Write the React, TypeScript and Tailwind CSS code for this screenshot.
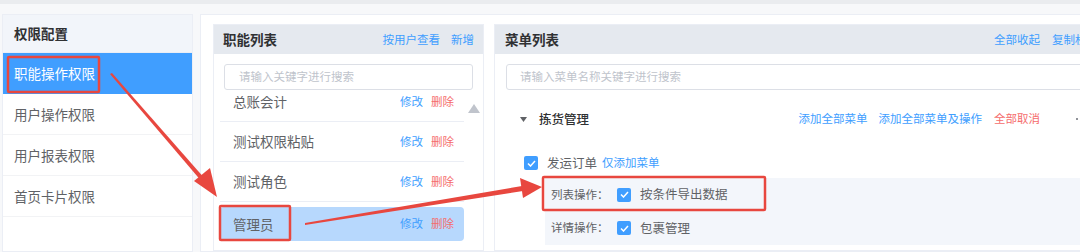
import React from "react";

const font = "font-['Noto_Sans_CJK_SC','Noto_Sans',sans-serif]";

function Check() {
  return (
    <span className="flex h-[14px] w-[14px] shrink-0 items-center justify-center rounded-[2px] bg-[#409eff]">
      <svg width="9" height="7" viewBox="0 0 9 7" fill="none">
        <path d="M1 3.5 L3.5 6 L8 1" stroke="white" strokeWidth="1.5" />
      </svg>
    </span>
  );
}

const roles = ["总账会计", "测试权限粘贴", "测试角色"];
const sideItems = ["用户操作权限", "用户报表权限", "首页卡片权限"];

export default function App() {
  return (
    <div className={`relative h-[252px] w-[1080px] overflow-hidden border-t-4 border-[#eaecef] bg-[#f7f8fa] ${font}`}>
      <div className="flex h-full gap-[7px] pl-[2px] pt-[10px]">
        {/* left menu */}
        <div className="w-[191px] shrink-0 border border-[#ebeef5] bg-white">
          <div className="flex h-[38px] items-center border-b border-[#ebeef5] bg-[#f2f5fa] pl-[11px] text-[13.5px] font-bold text-[#303133]">
            权限配置
          </div>
          <div className="flex h-[41px] items-center bg-[#409eff] pl-[11px] text-[13.5px] text-white">职能操作权限</div>
          {sideItems.map((s) => (
            <div key={s} className="flex h-[41px] items-center border-b border-[#f2f3f5] pl-[11px] text-[13.5px] text-[#606266]">
              {s}
            </div>
          ))}
        </div>

        {/* main */}
        <div className="flex w-[910px] shrink-0 gap-[10px] border border-[#ebeef5] bg-white pl-[12px] pt-[9px]">
          {/* roles */}
          <div className="flex w-[271px] shrink-0 flex-col border border-[#ebeef5]">
            <div className="flex h-[29px] items-center justify-between bg-[#e5e9ef] pl-[9px] pr-[9px]">
              <span className="text-[13.5px] font-bold text-[#303133]">职能列表</span>
              <div className="flex gap-[11px] text-[11.5px] text-[#409eff]">
                <span>按用户查看</span>
                <span>新增</span>
              </div>
            </div>
            <div className="mx-[10px] mt-[10px] flex h-[26px] items-center rounded-[3px] border border-[#dcdfe6] pl-[14px] text-[11.5px] text-[#c0c4cc]">
              请输入关键字进行搜索
            </div>
            <div className="mt-[6px] flex h-[152px] overflow-hidden">
              <div className="w-[250px] pl-[6px]">
                <div className="-mt-[14px]">
                  {roles.map((r) => (
                    <div key={r} className="flex h-[40px] items-center justify-between border-b border-[#ebeef5] pl-[13px] pr-[10px]">
                      <span className="text-[13.5px] text-[#606266]">{r}</span>
                      <div className="flex gap-[8px] text-[11.5px]">
                        <span className="text-[#409eff]">修改</span>
                        <span className="text-[#f56c6c]">删除</span>
                      </div>
                    </div>
                  ))}
                  <div className="pt-[5px]">
                    <div className="flex h-[34px] items-center justify-between rounded-[4px] bg-[#b7d8fd] pl-[13px] pr-[10px]">
                      <span className="text-[13.5px] text-[#606266]">管理员</span>
                      <div className="flex gap-[8px] text-[11.5px]">
                        <span className="text-[#409eff]">修改</span>
                        <span className="text-[#f56c6c]">删除</span>
                      </div>
                    </div>
                  </div>
                </div>
              </div>
              <div className="flex flex-1 justify-center pt-[8px]">
                <svg width="12" height="9" viewBox="0 0 12 9">
                  <path d="M6 0 L12 9 L0 9 Z" fill="#c0c4cc" />
                </svg>
              </div>
            </div>
          </div>

          {/* menus */}
          <div className="flex flex-1 flex-col border border-[#ebeef5]">
            <div className="flex h-[29px] shrink-0 items-center justify-between bg-[#e5e9ef] pl-[10px] pr-[10px]">
              <span className="text-[13.5px] font-bold text-[#303133]">菜单列表</span>
              <div className="flex gap-[12px] text-[11.5px] text-[#409eff]">
                <span>全部收起</span>
                <span>复制权限</span>
              </div>
            </div>
            <div className="ml-[11px] mt-[10px] flex h-[26px] shrink-0 items-center rounded-l-[3px] border border-[#dcdfe6] pl-[13px] text-[11.5px] text-[#c0c4cc]">
              请输入菜单名称关键字进行搜索
            </div>
            <div className="mt-[18px] flex h-[22px] shrink-0 items-center justify-between pl-[25px] pr-[10px]">
              <div className="flex items-center gap-[12px]">
                <svg width="7" height="5" viewBox="0 0 7 5">
                  <path d="M0 0 L7 0 L3.5 5 Z" fill="#606266" />
                </svg>
                <span className="text-[12.5px] font-medium text-[#303133]">拣货管理</span>
              </div>
              <div className="flex items-center text-[11.5px]">
                <span className="text-[#409eff]">添加全部菜单</span>
                <span className="ml-[11px] text-[#409eff]">添加全部菜单及操作</span>
                <span className="ml-[12px] text-[#f56c6c]">全部取消</span>
                <span className="ml-[36px] h-[2px] w-[2px] bg-[#909399]" />
                <span className="w-[20px]" />
              </div>
            </div>
            <div className="mt-[23px] flex h-[20px] shrink-0 items-center pl-[29px]">
              <Check />
              <span className="ml-[9px] text-[12.5px] text-[#606266]">发运订单</span>
              <span className="ml-[5px] text-[11.5px] text-[#409eff]">仅添加菜单</span>
            </div>
            <div className="ml-[50px] mt-[5px] flex shrink-0 flex-col bg-[#f3f6fb] pl-[6px]">
              <div className="flex h-[33px] items-center text-[11.5px] text-[#606266]">
                <span className="w-[66px]">列表操作：</span>
                <Check />
                <span className="ml-[9px] text-[12.5px]">按条件导出数据</span>
              </div>
              <div className="flex h-[34px] items-center text-[11.5px] text-[#606266]">
                <span className="w-[66px]">详情操作：</span>
                <Check />
                <span className="ml-[9px] text-[12.5px]">包裹管理</span>
              </div>
            </div>
          </div>
        </div>
      </div>

      {/* annotations */}
      <svg className="pointer-events-none absolute left-0 top-[-4px]" width="1080" height="252" viewBox="0 0 1080 252">
        <g fill="none" stroke="#e8473f" strokeWidth="2.5">
          <rect x="8" y="57" width="91" height="35" rx="1" />
          <rect x="220" y="206" width="70" height="34" rx="1" />
          <rect x="543" y="177" width="222" height="33" rx="1" />
        </g>
        <g fill="#e8473f">
          <polygon points="110,74 112,73 206,180 203,183" />
          <polygon points="217,197 194,181 210,168" />
          <polygon points="305,225 305,223 522,186 523,191" />
          <polygon points="542,187 520,178 523,198" />
        </g>
      </svg>
    </div>
  );
}
